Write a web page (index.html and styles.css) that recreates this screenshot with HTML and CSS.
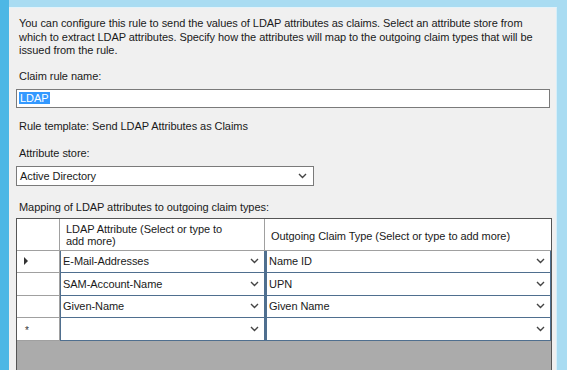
FILE: index.html
```html
<!DOCTYPE html>
<html lang="en">
<head>
  <meta charset="UTF-8" />
  <title>Edit Rule - LDAP</title>
  <link rel="stylesheet" href="styles.css">
</head>
<body>
  <div class="frame">
    <div class="panel">
      <p class="intro">You can configure this rule to send the values of LDAP attributes as claims. Select an attribute store from which to extract LDAP attributes. Specify how the attributes will map to the outgoing claim types that will be issued from the rule.</p>

      <label class="label first">Claim rule name:</label>
      <div class="textbox"><span class="selected">LDAP</span></div>

      <p class="label template">Rule template: Send LDAP Attributes as Claims</p>

      <label class="label store-label">Attribute store:</label>
      <div class="combo store">
        <span>Active Directory</span>
        <svg class="chev" width="9" height="6" viewBox="0 0 9 6"><path d="M1 1 L4.5 4.5 L8 1" fill="none" stroke="#444" stroke-width="1.4"/></svg>
      </div>

      <label class="label mapping">Mapping of LDAP attributes to outgoing claim types:</label>
      <div class="grid">
        <div class="row head">
          <div class="rh"></div>
          <div class="hc c1">LDAP Attribute (Select or type to add more)</div>
          <div class="hc c2">Outgoing Claim Type (Select or type to add more)</div>
        </div>
        <div class="row">
          <div class="rh"><span class="arrow"></span></div>
          <div class="cell c1"><span>E-Mail-Addresses</span><svg class="chev" width="9" height="6" viewBox="0 0 9 6"><path d="M1 1 L4.5 4.5 L8 1" fill="none" stroke="#444" stroke-width="1.4"/></svg></div>
          <div class="cell c2"><span>Name ID</span><svg class="chev" width="9" height="6" viewBox="0 0 9 6"><path d="M1 1 L4.5 4.5 L8 1" fill="none" stroke="#444" stroke-width="1.4"/></svg></div>
        </div>
        <div class="row">
          <div class="rh"></div>
          <div class="cell c1"><span>SAM-Account-Name</span><svg class="chev" width="9" height="6" viewBox="0 0 9 6"><path d="M1 1 L4.5 4.5 L8 1" fill="none" stroke="#444" stroke-width="1.4"/></svg></div>
          <div class="cell c2"><span>UPN</span><svg class="chev" width="9" height="6" viewBox="0 0 9 6"><path d="M1 1 L4.5 4.5 L8 1" fill="none" stroke="#444" stroke-width="1.4"/></svg></div>
        </div>
        <div class="row">
          <div class="rh"></div>
          <div class="cell c1"><span>Given-Name</span><svg class="chev" width="9" height="6" viewBox="0 0 9 6"><path d="M1 1 L4.5 4.5 L8 1" fill="none" stroke="#444" stroke-width="1.4"/></svg></div>
          <div class="cell c2"><span>Given Name</span><svg class="chev" width="9" height="6" viewBox="0 0 9 6"><path d="M1 1 L4.5 4.5 L8 1" fill="none" stroke="#444" stroke-width="1.4"/></svg></div>
        </div>
        <div class="row">
          <div class="rh star">*</div>
          <div class="cell c1"><span></span><svg class="chev" width="9" height="6" viewBox="0 0 9 6"><path d="M1 1 L4.5 4.5 L8 1" fill="none" stroke="#444" stroke-width="1.4"/></svg></div>
          <div class="cell c2"><span></span><svg class="chev" width="9" height="6" viewBox="0 0 9 6"><path d="M1 1 L4.5 4.5 L8 1" fill="none" stroke="#444" stroke-width="1.4"/></svg></div>
        </div>
        <div class="empty"></div>
      </div>
    </div>
  </div>
</body>
</html>
```

FILE: styles.css
```css
* {
  box-sizing: border-box;
}

body {
  margin: 0;
  height: 370px;
  overflow: hidden;
  background: #8fd3f0;
  font-family: "Liberation Sans", Arial, sans-serif;
  font-size: 11px;
  letter-spacing: -0.06px;
  color: #1a1a1a;
}

.frame {
  height: 100%;
  padding: 7px 9px 0 9px;
  background: linear-gradient(to right, #4db7e5 0, #4db7e5 9px, #a9dcf2 9px);
}

.panel {
  height: 100%;
  margin-right: 1px;
  background: #f0f0f0;
  border-top: 1px solid #e4f3fa;
  border-right: 1px solid #d8eef8;
  padding: 8px 6px 0 7px;
  display: flex;
  flex-direction: column;
}

.intro {
  margin: 0 6px 0 3px;
  line-height: 13.5px;
  padding-top: 1px;
}

.label {
  display: block;
  margin: 13px 0 0 3px;
  line-height: 13px;
}

.label.first {
  margin-top: 12px;
}

.template {
  margin-top: 12px;
}

.store-label {
  margin-top: 14px;
}

.mapping {
  margin-top: 15px;
}

.textbox {
  margin-top: 6px;
  height: 19px;
  background: #fff;
  border: 1px solid #7a7a7a;
  padding: 2px 2px;
  line-height: 13px;
}

.selected {
  background: #3399ff;
  color: #fff;
  padding: 0 1px;
}

.combo {
  margin-top: 6px;
  height: 20px;
  display: flex;
  align-items: center;
  justify-content: space-between;
  background: #fff;
  border: 1px solid #7a7a7a;
  padding: 0 6px 0 3px;
}

.store {
  width: 298px;
}

.grid {
  margin-top: 4px;
  margin-right: -2px;
  flex: 1;
  border: 1px solid #555;
  border-bottom: none;
  background: #ababab;
  display: flex;
  flex-direction: column;
}

.row {
  display: flex;
  height: 22.5px;
  background: #fff;
}

.row.head {
  height: 32px;
}

.rh {
  width: 43px;
  flex: none;
  border-right: 1px solid #a0a0a0;
  border-bottom: 1px solid #a0a0a0;
  background: #fff;
  display: flex;
  align-items: center;
  padding-left: 7px;
}

.arrow {
  width: 0;
  height: 0;
  border-top: 4px solid transparent;
  border-bottom: 4px solid transparent;
  border-left: 4px solid #333;
}

.star {
  font-size: 10px;
  color: #333;
  padding-top: 3px;
  padding-left: 8px;
}

.c1 {
  width: 205px;
  flex: none;
}

.c2 {
  flex: 1;
}

.hc {
  border-right: 1px solid #a0a0a0;
  border-bottom: 1px solid #a0a0a0;
  padding: 4px 0 0 6px;
  line-height: 12.5px;
}

.hc.c1 {
  padding-right: 30px;
}

.hc.c2 {
  border-right: none;
  padding-top: 11px;
}

.cell {
  display: flex;
  align-items: center;
  justify-content: space-between;
  border: 1px solid #4f6f8f;
  border-left-width: 2px;
  border-top: none;
  padding: 0 5px 0 2px;
  font-size: 11px;
  background: #fff;
}

.cell.c1 {
  border-left: 1px solid #4f6f8f;
}

.chev {
  flex: none;
}

.empty {
  flex: 1;
  background: #ababab;
}
```
